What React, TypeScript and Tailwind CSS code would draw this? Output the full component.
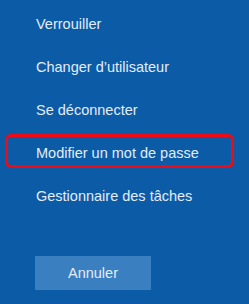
import React from "react";

const items = [
  "Verrouiller",
  "Changer d’utilisateur",
  "Se déconnecter",
  "Modifier un mot de passe",
  "Gestionnaire des tâches",
];

export default function App() {
  return (
    <div
      className="w-[249px] h-[304px] bg-[#0b5ba7] text-[#e3edf7] overflow-hidden"
      style={{ fontFamily: '"Liberation Sans", Arial, sans-serif' }}
    >
      <div className="flex flex-col pt-[3px]">
        {items.map((t, i) => (
          <div key={t} className="relative h-[43px] flex items-center pl-[36px] text-[14.5px]">
            {i === 3 && (
              <div className="absolute left-[5px] top-[2px] w-[229px] h-[34px] border-[3px] border-[#ee0a16] rounded-[6px]" />
            )}
            <span>{t}</span>
          </div>
        ))}
      </div>
      <div className="pl-[35px] mt-[38px]">
        <div className="w-[116px] h-[34px] bg-[#3a7fbf] flex items-center justify-center text-[14.5px] pt-[2px]">
          Annuler
        </div>
      </div>
    </div>
  );
}
